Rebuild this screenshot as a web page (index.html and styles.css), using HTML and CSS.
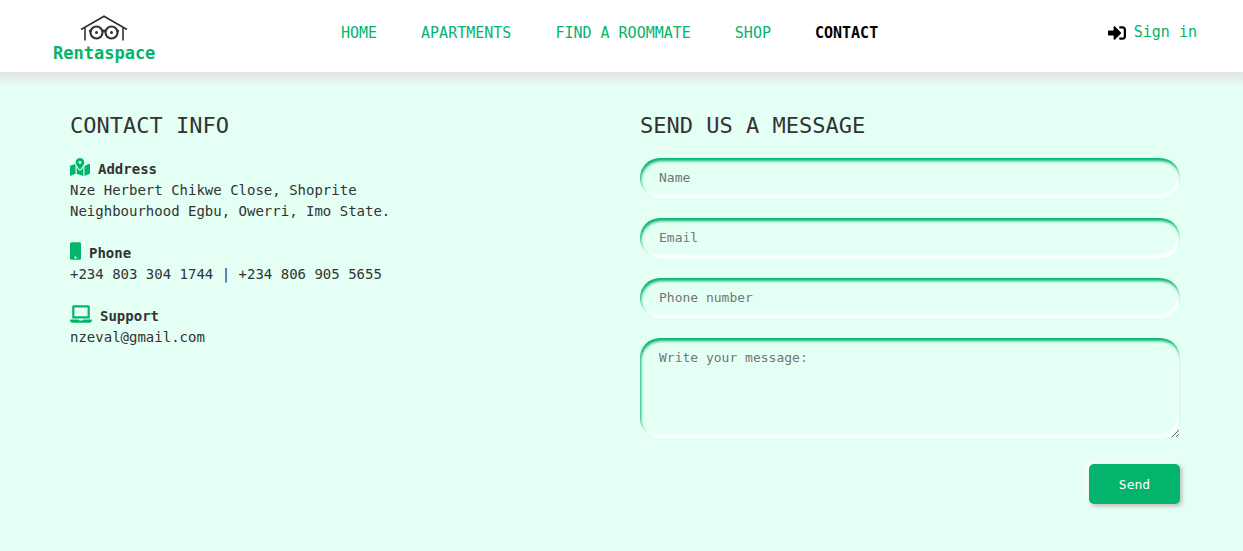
FILE: index.html
```html
<!DOCTYPE html>
<html lang="en">

<head>
    <meta charset="UTF-8">
    <meta name="viewport" content="width=device-width, initial-scale=1.0">
    <title>Rentaspace | Contact</title>
    <link rel="stylesheet" href="styles.css">
</head>

<body>
    <header class="header">
        <a href="#" class="logo">
            <svg class="logo-img" viewBox="0 0 48 26" fill="none" stroke="#333" aria-hidden="true">
                <path d="M1 14.5 L24 1.2 L47 14.5" stroke-width="1.8" />
                <path d="M5 13v12.500M43 13v12.500" stroke-width="1.600" />
                <circle cx="16.500" cy="17.500" r="6" stroke-width="2.200" />
                <circle cx="31.500" cy="17.500" r="6" stroke-width="2.200" />
                <path d="M9 16h2M37 16h2M22.500 16.500q1.500-1.500 3 0" stroke-width="2.200" />
                <circle cx="16.500" cy="17.500" r="1.500" fill="#333" stroke="none" />
                <circle cx="31.500" cy="17.500" r="1.500" fill="#333" stroke="none" />
            </svg>
            <span>Rentaspace</span>
        </a>
        <nav class="nav">
            <a href="#">HOME</a>
            <a href="#">APARTMENTS</a>
            <a href="#">FIND A ROOMMATE</a>
            <a href="#">SHOP</a>
            <a href="#" class="active">CONTACT</a>
        </nav>
        <a href="#" class="signin">
            <svg viewBox="0 0 512 512" fill="#000" aria-hidden="true">
                <path d="M416 448h-84c-6.600 0-12-5.400-12-12v-40c0-6.600 5.400-12 12-12h84c17.700 0 32-14.300 32-32V160c0-17.700-14.300-32-32-32h-84c-6.600 0-12-5.400-12-12V76c0-6.600 5.400-12 12-12h84c53 0 96 43 96 96v192c0 53-43 96-96 96zm-47-209L201 71c-15-15-41-4.500-41 17v96H24c-13.300 0-24 10.700-24 24v96c0 13.300 10.700 24 24 24h136v96c0 21.500 26 32 41 17l168-168c9.300-9.400 9.300-24.600 0-34z" />
            </svg>
            <span>Sign in</span>
        </a>
    </header>

    <main class="contact">
        <!-- contact info -->
        <section class="info">
            <h2>CONTACT INFO</h2>
            <div class="item">
                <h3>
                    <svg class="icon-map" viewBox="0 0 576 512" aria-hidden="true">
                        <path d="M288 0c-69.600 0-126 56.400-126 126 0 56.300 82.400 158.800 113.900 196 6.400 7.500 17.800 7.500 24.200 0C331.700 284.800 414 182.300 414 126 414 56.400 357.600 0 288 0zm0 168c-23.200 0-42-18.800-42-42s18.800-42 42-42 42 18.800 42 42-18.800 42-42 42zM20.100 216A32 32 0 0 0 0 245.700V496c0 11.300 11.400 19.100 21.900 14.900L160 448V214.900c-8.800-16-16.100-31.500-21.300-46.400L20.100 216zM288 359.700c-14.100 0-27.400-6.200-36.500-17-19.700-23.200-40.600-49.600-59.500-76.700V448l192 64V266c-18.900 27.100-39.800 53.500-59.500 76.700-9.100 10.800-22.400 17-36.500 17zm266.100-198.500L416 224v288l139.900-56A32 32 0 0 0 576 426.300V176c0-11.300-11.400-19.100-21.900-14.800z" />
                    </svg>
                    Address
                </h3>
                <p>Nze Herbert Chikwe Close, Shoprite<br>Neighbourhood Egbu, Owerri, Imo State.</p>
            </div>
            <div class="item">
                <h3>
                    <svg class="icon-phone" viewBox="0 0 320 512" aria-hidden="true">
                        <path d="M272 0H48C21.500 0 0 21.500 0 48v416c0 26.500 21.500 48 48 48h224c26.500 0 48-21.500 48-48V48c0-26.500-21.500-48-48-48zM160 480c-17.700 0-32-14.300-32-32s14.300-32 32-32 32 14.300 32 32-14.300 32-32 32z" />
                    </svg>
                    Phone
                </h3>
                <p>+234 803 304 1744 | +234 806 905 5655</p>
            </div>
            <div class="item">
                <h3>
                    <svg class="icon-laptop" viewBox="0 0 640 512" aria-hidden="true">
                        <path d="M624 416H381.500c-.7 19.800-14.700 32-32.700 32H288c-18.700 0-33-17.500-32.800-32H16c-8.800 0-16 7.200-16 16v16c0 35.200 28.800 64 64 64h512c35.200 0 64-28.800 64-64v-16c0-8.800-7.200-16-16-16zM576 48c0-26.400-21.600-48-48-48H112C85.600 0 64 21.600 64 48v336h512V48zm-64 272H128V64h384v256z" />
                    </svg>
                    Support
                </h3>
                <p>nzeval@gmail.com</p>
            </div>
        </section>

        <!-- message form -->
        <section class="message">
            <h2>SEND US A MESSAGE</h2>
            <form>
                <input type="text" placeholder="Name" aria-label="Name">
                <input type="email" placeholder="Email" aria-label="Email">
                <input type="tel" placeholder="Phone number" aria-label="Phone number">
                <textarea placeholder="Write your message:" aria-label="Write your message"></textarea>
                <button type="submit">Send</button>
            </form>
        </section>
    </main>
</body>

</html>
```
FILE: styles.css
```css
* {
    margin: 0;
    padding: 0;
    box-sizing: border-box;
}

body {
    font-family: Consolas, "DejaVu Sans Mono", monospace;
    font-size: 14px;
    line-height: 21px;
    color: #333;
    background-color: #e4fff4;
}

a {
    color: #04b46c;
    text-decoration: none;
}

.header {
    display: flex;
    justify-content: space-between;
    align-items: flex-start;
    height: 72px;
    padding: 0 46px 0 53px;
    background-color: #fff;
    box-shadow: 0 4px 8px 4px #e4e4e4;
}

.logo {
    display: flex;
    flex-direction: column;
    align-items: center;
    gap: 2px;
    padding-top: 15px;
    font-size: 17px;
    font-weight: bold;
}

.logo-img {
    width: 48px;
    height: 26px;
}

.nav {
    display: flex;
    gap: 44px;
    padding: 23px 44px 0 0;
    font-size: 15px;
}

.nav .active {
    font-weight: bold;
    color: #000;
}

.signin {
    display: flex;
    align-items: center;
    gap: 8px;
    padding-top: 22px;
    font-size: 15px;
}

.signin svg {
    width: 18px;
    height: 18px;
}

.contact {
    display: grid;
    grid-template-columns: 1fr 1fr;
    gap: 30px;
    padding: 39px 63px 40px 70px;
}

h2 {
    margin-bottom: 17px;
    font-size: 22px;
    font-weight: normal;
    line-height: 30px;
}

.item {
    margin-bottom: 20px;
}

h3 {
    display: flex;
    align-items: flex-start;
    gap: 8px;
    font-size: 14px;
    line-height: 22px;
}

h3 svg {
    height: 18px;
    fill: #04b46c;
}

.icon-map {
    width: 20px;
}

.icon-phone {
    width: 11px;
}

.icon-laptop {
    width: 22px;
}

form {
    display: flex;
    flex-direction: column;
    gap: 20px;
}

input,
textarea {
    width: 100%;
    height: 40px;
    padding: 0 19px 2px;
    border: none;
    border-radius: 20px;
    outline: none;
    background-color: transparent;
    box-shadow: inset 1px 3px 3px #04b46c, inset -2px -3px 3px #fff;
    font-family: inherit;
    font-size: 13px;
    color: #333;
}

textarea {
    height: 100px;
    padding-top: 12px;
    resize: vertical;
}

button {
    align-self: flex-end;
    width: 91px;
    height: 40px;
    margin-top: 6px;
    border: none;
    border-radius: 5px;
    background-color: #04b46c;
    box-shadow: 2px 2px 4px #bbb, -2px -2px 4px #fff;
    font-family: inherit;
    font-size: 13px;
    color: #fff;
    cursor: pointer;
}
```
